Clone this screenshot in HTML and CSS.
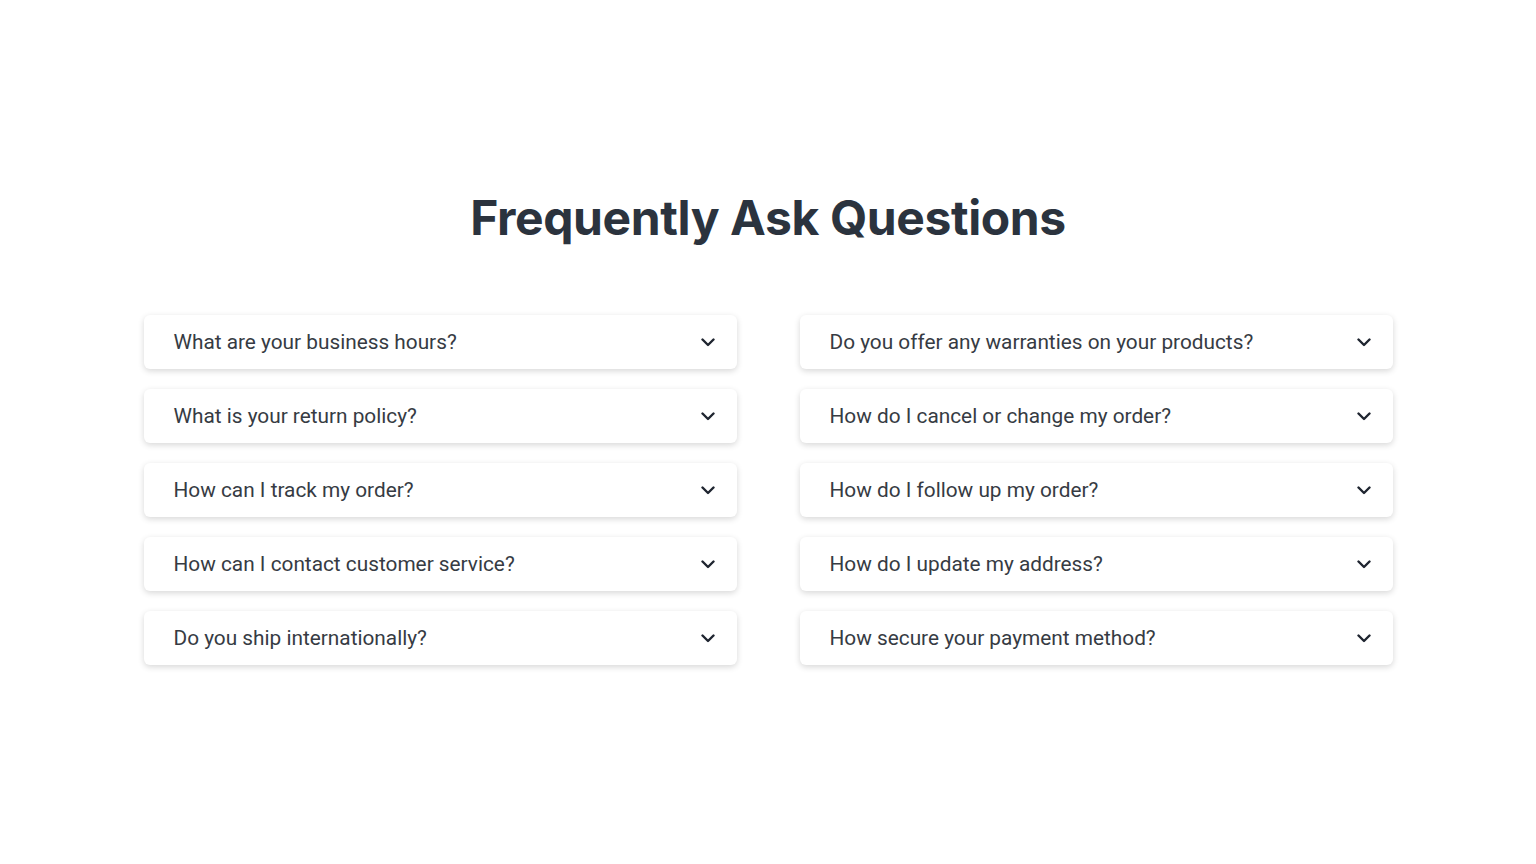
FILE: index.html
```html
<!DOCTYPE html>
<html lang="en">
<head>
<meta charset="utf-8">
<title>FAQ</title>
<meta name="viewport" content="width=device-width, initial-scale=1">
<link rel="stylesheet" href="styles.css">
</head>
<body>
	<section class="faq">
		<h1 class="faq-title">Frequently Ask Questions</h1>
		<div class="faq-grid">
			<div class="faq-col">
				<div class="faq-item"><span>What are your business hours?</span><svg class="chev" viewBox="0 0 14 9"><path d="M1.5 1.5 7 7l5.5-5.5"/></svg></div>
				<div class="faq-item"><span>What is your return policy?</span><svg class="chev" viewBox="0 0 14 9"><path d="M1.5 1.5 7 7l5.5-5.5"/></svg></div>
				<div class="faq-item"><span>How can I track my order?</span><svg class="chev" viewBox="0 0 14 9"><path d="M1.5 1.5 7 7l5.5-5.5"/></svg></div>
				<div class="faq-item"><span>How can I contact customer service?</span><svg class="chev" viewBox="0 0 14 9"><path d="M1.5 1.5 7 7l5.5-5.5"/></svg></div>
				<div class="faq-item"><span>Do you ship internationally?</span><svg class="chev" viewBox="0 0 14 9"><path d="M1.5 1.5 7 7l5.5-5.5"/></svg></div>
			</div>
			<div class="faq-col">
				<div class="faq-item"><span>Do you offer any warranties on your products?</span><svg class="chev" viewBox="0 0 14 9"><path d="M1.5 1.5 7 7l5.5-5.5"/></svg></div>
				<div class="faq-item"><span>How do I cancel or change my order?</span><svg class="chev" viewBox="0 0 14 9"><path d="M1.5 1.5 7 7l5.5-5.5"/></svg></div>
				<div class="faq-item"><span>How do I follow up my order?</span><svg class="chev" viewBox="0 0 14 9"><path d="M1.5 1.5 7 7l5.5-5.5"/></svg></div>
				<div class="faq-item"><span>How do I update my address?</span><svg class="chev" viewBox="0 0 14 9"><path d="M1.5 1.5 7 7l5.5-5.5"/></svg></div>
				<div class="faq-item"><span>How secure your payment method?</span><svg class="chev" viewBox="0 0 14 9"><path d="M1.5 1.5 7 7l5.5-5.5"/></svg></div>
			</div>
		</div>
	</section>
</body>
</html>
```
FILE: styles.css
```css
*{ margin:0; padding:0; box-sizing:border-box; }
body{ background:#fff; font-family:Roboto, "Liberation Sans", sans-serif; color:#2d3540; }

.faq{ width:1249px; margin:0 auto; padding:188px 0 200px; }
.faq-title{ font-family:Inter, "Liberation Sans", sans-serif; font-weight:700; font-size:48px; letter-spacing:-0.4px; line-height:60px; text-align:center; color:#2b333e; }

.faq-grid{ display:grid; grid-template-columns:593px 593px; column-gap:63px; margin-top:67px; }
.faq-col{ display:flex; flex-direction:column; gap:20px; }
.faq-item{ height:54px; display:flex; align-items:center; justify-content:space-between; padding:0 22px 0 30px; background:#fff; border-radius:6px; box-shadow:0 2px 6px rgba(0,0,0,0.16); font-size:20.8px; color:#363b43; }
.chev{ width:14px; height:9px; fill:none; stroke:#1f2530; stroke-width:2.4; stroke-linecap:round; stroke-linejoin:round; }
```
